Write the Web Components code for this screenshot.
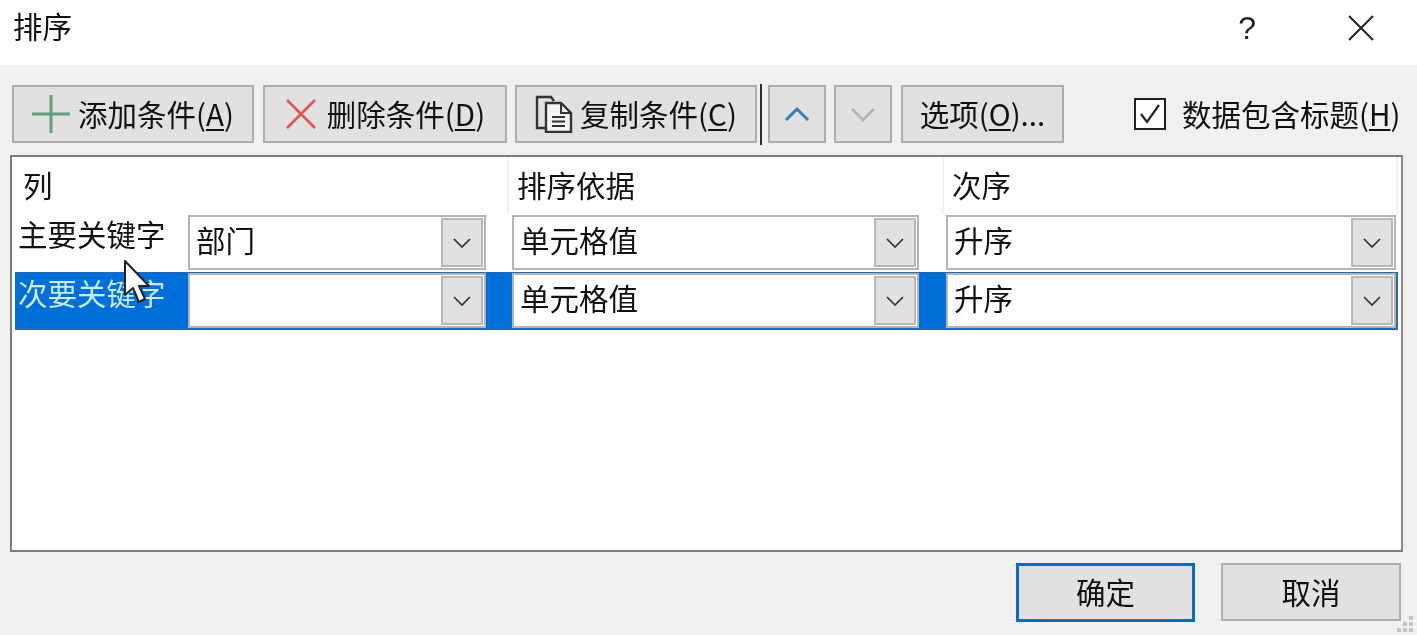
<!DOCTYPE html>
<html lang="zh">
<head>
<meta charset="utf-8">
<title>排序</title>
<style>
  html, body { margin: 0; padding: 0; background: #f0f0f0; }
  body { font-family: "Noto Sans CJK SC", "Liberation Sans", sans-serif; overflow: hidden; }
</style>
</head>
<body>
<sort-dialog></sort-dialog>

<script>
// small button of the toolbar and of the footer
class ToolButton extends HTMLElement {
  constructor() {
    super();
    this.attachShadow({ mode: "open" });
    this.shadowRoot.innerHTML = `
      <style>
        :host {
          display: flex;
          align-items: center;
          justify-content: center;
          box-sizing: border-box;
          height: 58px;
          padding-bottom: 1px;
          background: #e1e1e1;
          border: 2px solid #adadad;
          color: #111;
          font-size: 29.500px;
          line-height: 1;
          white-space: nowrap;
        }
        :host([primary]) {
          border: 3px solid #0a6cc4;
        }
        ::slotted(svg) { flex: none; }
      </style>
      <slot></slot>
    `;
  }
}
customElements.define("tool-button", ToolButton);

// dropdown cell
class SortCombo extends HTMLElement {
  constructor() {
    super();
    this.attachShadow({ mode: "open" });
    this.shadowRoot.innerHTML = `
      <style>
        :host {
          display: flex;
          align-items: center;
          box-sizing: border-box;
          height: 55px;
          background: #fff;
          border: 2px solid #b4b4b4;
          color: #111;
          font-size: 29.500px;
          line-height: 1;
          padding-right: 1px;
        }
        .value { flex: 1; padding: 0 0 5px 6px; }
        .arrow {
          flex: none;
          box-sizing: border-box;
          width: 42px;
          height: 49px;
          background: #e1e1e1;
          border: 2px solid #b8b8b8;
          display: flex;
          align-items: center;
          justify-content: center;
        }
      </style>
      <span class="value"><slot></slot></span>
      <span class="arrow">
        <svg width="18" height="10" viewBox="0 0 18 10"><path d="M1 1l8 8 8-8" fill="none" stroke="#333" stroke-width="1.7"/></svg>
      </span>
    `;
  }
}
customElements.define("sort-combo", SortCombo);

// one condition row of the list
class SortRow extends HTMLElement {
  constructor() {
    super();
    this.attachShadow({ mode: "open" });
    this.shadowRoot.innerHTML = `
      <style>
        :host {
          display: grid;
          grid-template-columns: 147px 298px 407px 451px;
          column-gap: 26px;
          box-sizing: border-box;
          height: 57px;
          margin-left: 3px;
          width: 1382px;
          padding-top: 1px;
          color: #111;
        }
        :host([selected]) {
          background: #006fd9;
          color: #c9ecff;
          border-top: 1px solid #2a69ad;
          border-bottom: 2px solid #2a69ad;
          border-right: 2px solid #2a69ad;
          margin-top: 1px;
          padding-top: 0;
          height: 58px;
          width: 1383px;
        }
        .head {
          font-size: 29.500px;
          line-height: 1;
          padding: 4px 0 0 3px;
          white-space: nowrap;
        }
        :host([selected]) .head { padding-top: 5px; }
      </style>
      <div class="head"><slot name="head"></slot></div>
      <slot name="col"></slot>
    `;
  }
}
customElements.define("sort-row", SortRow);

class SortDialog extends HTMLElement {
  constructor() {
    super();
    this.attachShadow({ mode: "open" });
    this.shadowRoot.innerHTML = `
      <style>
        :host {
          display: block;
          position: relative;
          width: 1417px;
          height: 635px;
          background: #f0f0f0;
          color: #111;
          font-size: 29.500px;
          overflow: hidden;
          filter: blur(0.4px);
        }
        .titlebar {
          display: flex;
          align-items: center;
          height: 65px;
          background: #fff;
          padding: 0 43px 10px 13px;
          box-sizing: border-box;
          line-height: 1;
        }
        .titlebar .name { flex: 1; padding-bottom: 3px; }
        .help { font-family: "Liberation Sans", sans-serif; font-size: 32px; color: #222; margin-right: 92px; }
        .toolbar {
          display: flex;
          align-items: center;
          padding: 20px 0 0 12px;
          height: 58px;
        }
        .sep { width: 2px; height: 61px; background: #2b2b2b; margin: 0 6px 0 3px; }
        .toolbar svg { margin-right: 8px; }
        .plain svg { margin: 0; }
        .check {
          display: flex;
          align-items: center;
          margin-left: 70px;
          white-space: nowrap;
          line-height: 1;
        }
        .box {
          box-sizing: border-box;
          width: 32px;
          height: 32px;
          border: 2px solid #222;
          background: #fff;
          margin-right: 16px;
          display: flex;
          align-items: center;
          justify-content: center;
        }
        .box svg { margin: 0; }
        .list {
          box-sizing: border-box;
          margin: 12px 0 0 10px;
          width: 1393px;
          height: 397px;
          background: #fff;
          border: 2px solid #7c7c7c;
          border-right-color: #8a8a8a;
        }
        .header {
          display: grid;
          grid-template-columns: 497px 435px 454px;
          height: 57px;
          line-height: 1;
        }
        .header div {
          padding: 13px 0 0 8px;
          box-sizing: border-box;
          border-right: 2px solid #f2f2f2;
        }
        .header div:first-child { padding-left: 11px; }
        .footer {
          display: flex;
          justify-content: flex-end;
          padding: 11px 16px 0 0;
          gap: 26px;
        }
        u { text-underline-offset: 3px; text-decoration-thickness: 2px; }
        .cursor { position: absolute; left: 123px; top: 260px; }
        .grip { position: absolute; right: 2px; bottom: 1px; }
      </style>

      <div class="titlebar">
        <span class="name">排序</span>
        <span class="help">?</span>
        <svg width="26" height="26" viewBox="0 0 26 26"><path d="M1 1l24 24M25 1L1 25" stroke="#222" stroke-width="2" fill="none"/></svg>
      </div>

      <div class="toolbar">
        <tool-button style="width:242px">
          <svg width="38" height="38" viewBox="0 0 38 38"><path d="M19 0v38M0 19h38" stroke="#5f9f7c" stroke-width="3" fill="none"/></svg>
          <span>添加条件(<u>A</u>)</span>
        </tool-button>
        <tool-button style="width:244px;margin-left:9px">
          <svg width="32" height="32" viewBox="0 0 32 32"><path d="M2 2l28 28M30 2L2 30" stroke="#e0574f" stroke-width="2.6" fill="none"/></svg>
          <span style="margin-left:2px">删除条件(<u>D</u>)</span>
        </tool-button>
        <tool-button style="width:242px;margin-left:8px">
          <svg width="40" height="38" viewBox="0 0 40 38" style="margin-right:5px">
            <path d="M14 33H2V2h14l3 4" fill="none" stroke="#333" stroke-width="2.4"/>
            <path d="M11 8h15l10 10v19H11z" fill="#f4f4f4" stroke="#333" stroke-width="2.4"/>
            <path d="M26 8v10h10M17 22h13M17 26.500h13M17 31h13" fill="none" stroke="#333" stroke-width="2"/>
          </svg>
          <span>复制条件(<u>C</u>)</span>
        </tool-button>
        <div class="sep"></div>
        <tool-button class="plain" style="width:58px">
          <svg width="26" height="16" viewBox="0 0 26 16"><path d="M2 14L13 3l11 11" fill="none" stroke="#2f7fbe" stroke-width="3"/></svg>
        </tool-button>
        <tool-button class="plain" style="width:58px;margin-left:8px">
          <svg width="26" height="16" viewBox="0 0 26 16"><path d="M2 3l11 11L24 3" fill="none" stroke="#b3b3b3" stroke-width="2.6"/></svg>
        </tool-button>
        <tool-button style="width:163px;margin-left:9px">
          <span>选项(<u>O</u>)...</span>
        </tool-button>
        <div class="check">
          <span class="box"><svg width="24" height="22" viewBox="0 0 24 22"><path d="M3 11l6 8L21 2" fill="none" stroke="#222" stroke-width="2.2"/></svg></span>
          <span>数据包含标题(<u>H</u>)</span>
        </div>
      </div>

      <div class="list">
        <div class="header"><div>列</div><div>排序依据</div><div>次序</div></div>
        <sort-row>
          <span slot="head">主要关键字</span>
          <sort-combo slot="col">部门</sort-combo>
          <sort-combo slot="col">单元格值</sort-combo>
          <sort-combo slot="col" style="margin-left:1px">升序</sort-combo>
        </sort-row>
        <sort-row selected>
          <span slot="head">次要关键字</span>
          <sort-combo slot="col"></sort-combo>
          <sort-combo slot="col">单元格值</sort-combo>
          <sort-combo slot="col" style="margin-left:1px">升序</sort-combo>
        </sort-row>
      </div>

      <div class="footer">
        <tool-button primary style="width:179px;height:59px">确定</tool-button>
        <tool-button style="width:180px">取消</tool-button>
      </div>

      <svg class="cursor" width="28" height="46" viewBox="0 0 28 46">
        <path d="M2 1v34l8-7 6 14 6-3-6-13h10z" fill="#fff" stroke="#222" stroke-width="2" stroke-linejoin="round"/>
      </svg>

      <svg class="grip" width="18" height="18" viewBox="0 0 18 18" fill="#c4c4c4">
        <rect x="12" y="0" width="4" height="4"/><rect x="6" y="6" width="4" height="4"/><rect x="12" y="6" width="4" height="4"/>
        <rect x="0" y="12" width="4" height="4"/><rect x="6" y="12" width="4" height="4"/><rect x="12" y="12" width="4" height="4"/>
      </svg>
    `;
  }
}
customElements.define("sort-dialog", SortDialog);
</script>
</body>
</html>
